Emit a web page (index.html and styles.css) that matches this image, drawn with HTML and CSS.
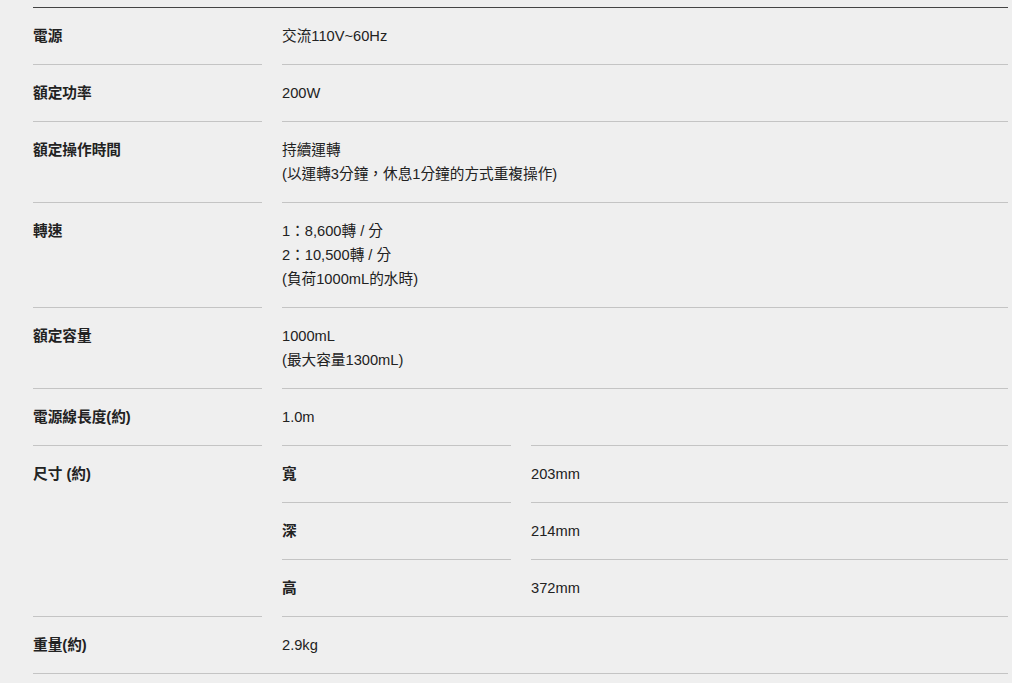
FILE: index.html
```html
<!DOCTYPE html>
<html lang="zh-Hant">
<head>
<meta charset="utf-8">
<link rel="stylesheet" href="styles.css">
</head>
<body>
<dl class="spec">
  <div class="row first">
    <dt class="label">電源</dt>
    <dd class="value">交流110V~60Hz</dd>
  </div>
  <div class="row">
    <dt class="label">額定功率</dt>
    <dd class="value">200W</dd>
  </div>
  <div class="row">
    <dt class="label">額定操作時間</dt>
    <dd class="value">持續運轉<br>(以運轉3分鐘，休息1分鐘的方式重複操作)</dd>
  </div>
  <div class="row">
    <dt class="label">轉速</dt>
    <dd class="value">1：8,600轉 / 分<br>2：10,500轉 / 分<br>(負荷1000mL的水時)</dd>
  </div>
  <div class="row">
    <dt class="label">額定容量</dt>
    <dd class="value">1000mL<br>(最大容量1300mL)</dd>
  </div>
  <div class="row">
    <dt class="label">電源線長度(約)</dt>
    <dd class="value">1.0m</dd>
  </div>
  <div class="row">
    <dt class="label">尺寸 (約)</dt>
    <dd class="value nested">
      <div class="subrow"><span class="sublabel">寬</span><span class="subvalue">203mm</span></div>
      <div class="subrow"><span class="sublabel">深</span><span class="subvalue">214mm</span></div>
      <div class="subrow"><span class="sublabel">高</span><span class="subvalue">372mm</span></div>
    </dd>
  </div>
  <div class="row">
    <dt class="label">重量(約)</dt>
    <dd class="value">2.9kg</dd>
  </div>
</dl>
</body>
</html>
```
FILE: styles.css
```css
html, body {
  margin: 0;
  padding: 0;
  background: #efefef;
}
body {
  padding-top: 7px;
  font-family: "Liberation Sans", Arial, "Noto Sans CJK TC", sans-serif;
  font-size: 14.667px;
  line-height: 24px;
  color: #222;
}
.spec {
  margin: 0 0 0 33px;
  width: 975px;
  border-top: 1px solid #444;
  border-bottom: 1px solid #c4c4c4;
}
.row {
  display: grid;
  grid-template-columns: 229px 726px;
  column-gap: 20px;
}
.label, .value {
  margin: 0;
  padding: 16px 0;
  border-top: 1px solid #c4c4c4;
}
.row.first .label, .row.first .value {
  border-top: none;
}
.label {
  font-weight: bold;
}
.value.nested {
  padding: 0;
  border-top: none;
}
.subrow {
  display: grid;
  grid-template-columns: 229px 477px;
  column-gap: 20px;
}
.sublabel, .subvalue {
  padding: 16px 0;
  border-top: 1px solid #c4c4c4;
}
.sublabel {
  font-weight: bold;
}
```
